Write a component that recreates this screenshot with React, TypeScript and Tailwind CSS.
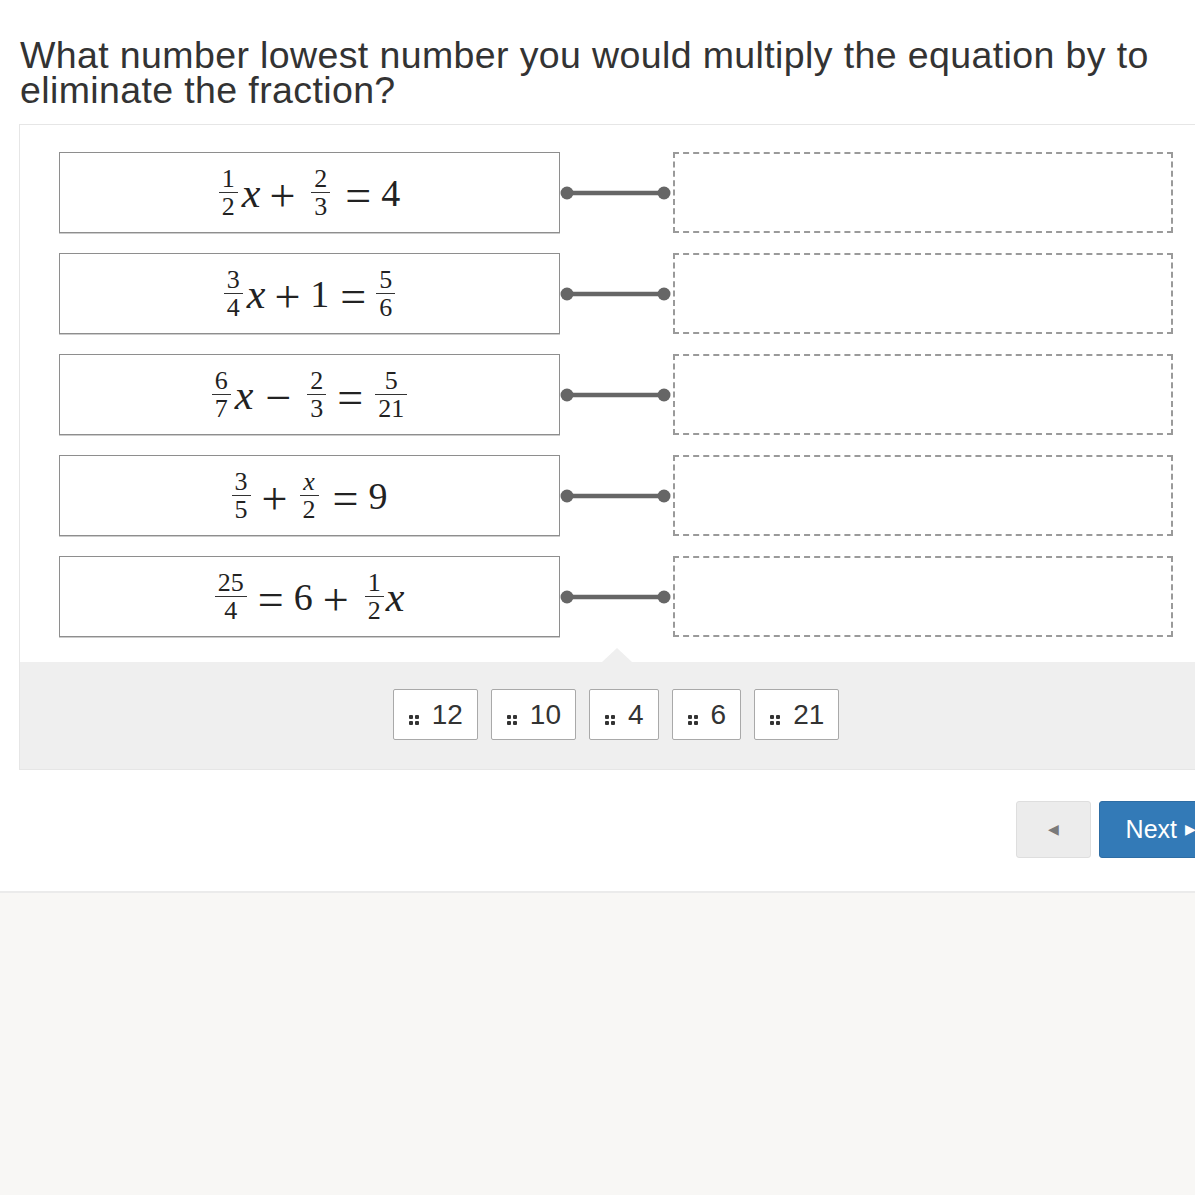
import React from 'react';

const sans = "font-['Liberation_Sans',Arial,sans-serif]";
const serif = "font-['Liberation_Serif','Times_New_Roman',serif]";

function Frac({ n, d }: { n: React.ReactNode; d: React.ReactNode }) {
  return (
    <span className="inline-flex flex-col items-center text-[26px] leading-[22px]">
      <span className="px-[3px] pb-[2px]">{n}</span>
      <span className="self-stretch border-t border-[#333]" />
      <span className="px-[3px] pt-[3px]">{d}</span>
    </span>
  );
}

const X = () => <span className="italic text-[42px] leading-none">x</span>;
// operators drawn a size up so they read like the thin, wide TeX glyphs
const Op = ({ c }: { c: string }) => <span className="text-[46px] leading-none pt-[6px]">{c}</span>;
const N = ({ c }: { c: string }) => <span className="leading-none">{c}</span>;
const Sp = ({ w }: { w: string }) => <span className={`inline-block ${w}`} />;

const equations: React.ReactNode[] = [
  <>
    <Frac n="1" d="2" />
    <Sp w="w-[4px]" />
    <X />
    <Sp w="w-[9px]" />
    <Op c="+" />
    <Sp w="w-[16px]" />
    <Frac n="2" d="3" />
    <Sp w="w-[15px]" />
    <Op c="=" />
    <Sp w="w-[10px]" />
    <N c="4" />
  </>,
  <>
    <Frac n="3" d="4" />
    <Sp w="w-[4px]" />
    <X />
    <Sp w="w-[9px]" />
    <Op c="+" />
    <Sp w="w-[10px]" />
    <N c="1" />
    <Sp w="w-[11px]" />
    <Op c="=" />
    <Sp w="w-[10px]" />
    <Frac n="5" d="6" />
  </>,
  <>
    <Frac n="6" d="7" />
    <Sp w="w-[4px]" />
    <X />
    <Sp w="w-[12px]" />
    <Op c="−" />
    <Sp w="w-[16px]" />
    <Frac n="2" d="3" />
    <Sp w="w-[11px]" />
    <Op c="=" />
    <Sp w="w-[12px]" />
    <Frac n="5" d="21" />
  </>,
  <>
    <Frac n="3" d="5" />
    <Sp w="w-[11px]" />
    <Op c="+" />
    <Sp w="w-[12px]" />
    <Frac n={<span className="italic">x</span>} d="2" />
    <Sp w="w-[14px]" />
    <Op c="=" />
    <Sp w="w-[10px]" />
    <N c="9" />
  </>,
  <>
    <Frac n="25" d="4" />
    <Sp w="w-[11px]" />
    <Op c="=" />
    <Sp w="w-[10px]" />
    <N c="6" />
    <Sp w="w-[10px]" />
    <Op c="+" />
    <Sp w="w-[16px]" />
    <Frac n="1" d="2" />
    <Sp w="w-[2px]" />
    <X />
  </>,
];

const answers = ['12', '10', '4', '6', '21'];

function Grip() {
  return (
    <span className="grid grid-cols-2 gap-[2px] mr-[13px] mt-[11px]">
      <span className="w-[4px] h-[4px] rounded-[1px] bg-[#333]" />
      <span className="w-[4px] h-[4px] rounded-[1px] bg-[#333]" />
      <span className="w-[4px] h-[4px] rounded-[1px] bg-[#333]" />
      <span className="w-[4px] h-[4px] rounded-[1px] bg-[#333]" />
    </span>
  );
}

function Connector() {
  return (
    <svg width="113" height="20" viewBox="0 0 113 20" className="shrink-0">
      <line x1="7" y1="10" x2="104" y2="10" stroke="#666" strokeWidth="4.5" />
      <circle cx="7" cy="10" r="6.5" fill="#666" />
      <circle cx="104" cy="10" r="6.5" fill="#666" />
    </svg>
  );
}

export default function App() {
  return (
    <div className={`min-h-[1195px] bg-[#f8f7f5] overflow-hidden ${sans}`}>
      <div className="bg-white border-b-2 border-[#ebebeb] pl-[19px] pt-[38px] pb-[33px]">
        <h1 className="text-[37.5px] leading-[35px] text-[#333] tracking-[0.38px] pl-[1px] mb-[16px]">
          What number lowest number you would multiply the equation by to eliminate the fraction?
        </h1>

        <div className="w-[1194px] border border-[#e6e6e6]">
          <div className="flex flex-col gap-[20px] pt-[27px] pl-[39px] pb-[25px]">
            {equations.map((eq, i) => (
              <div key={i} className="flex items-center">
                <div
                  className={`w-[501px] h-[81px] border border-[#8e8e8e] shadow-[0_1px_0_#ccc] flex items-center justify-center text-[38px] text-[#222] ${serif}`}
                >
                  {eq}
                </div>
                <Connector />
                <div className="w-[500px] h-[81px] border-2 border-dashed border-[#9a9a9a]" />
              </div>
            ))}
          </div>

          <div className="relative bg-[#efefef] h-[107px] flex justify-center items-start gap-[13px] pt-[27px]">
            <span className="absolute left-[582px] top-[-14px] w-0 h-0 border-l-[15px] border-r-[15px] border-b-[14px] border-l-transparent border-r-transparent border-b-[#efefef]" />
            {answers.map((a) => (
              <div
                key={a}
                className="h-[51px] bg-white border border-[#a9a9a9] rounded-[2px] flex items-center pl-[15px] pr-[14px] text-[28px] text-[#333]"
              >
                <Grip />
                <span>{a}</span>
              </div>
            ))}
          </div>
        </div>

        <div className="w-[1194px] flex justify-end gap-[8px] mt-[31px]">
          <button className="w-[75px] h-[57px] bg-[#ececec] border border-[#dedede] rounded-[3px] flex items-center justify-center text-[#7a7a7a] text-[14px]">
            ◀
          </button>
          <button className="h-[57px] bg-[#337ab7] border border-[#2e6da4] rounded-[3px] pl-[26px] pr-[16px] text-white text-[25px] flex items-center gap-[8px]">
            Next <span className="text-[14px]">▶</span>
          </button>
        </div>
      </div>
    </div>
  );
}
